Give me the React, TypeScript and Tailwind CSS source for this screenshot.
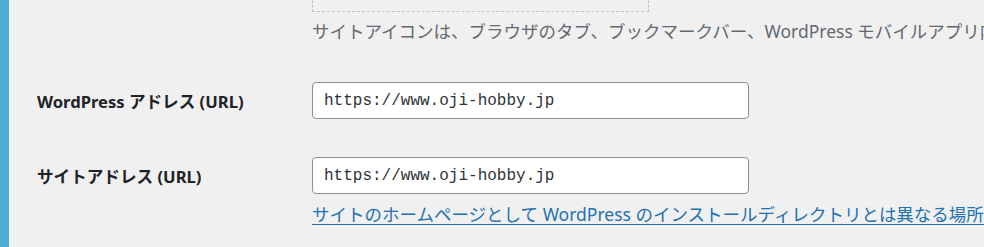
export default function App() {
  const jp = "font-['Noto_Sans','Noto_Sans_CJK_JP',sans-serif]";
  return (
    <div className={`flex h-[247px] w-[984px] overflow-hidden bg-[#f0f0f1] ${jp}`}>
      <div className="w-[9px] shrink-0 bg-[#4eafd2]" />
      <div className="flex min-w-0 flex-1 flex-col pl-[28px]">
        {/* site icon row */}
        <div className="flex">
          <div className="w-[275px] shrink-0" />
          <div className="min-w-0">
            <div className="h-[12px] w-[337px] border border-t-0 border-dashed border-[#c3c4c7]" />
            <p className="mt-[7px] whitespace-nowrap text-[17.5px] leading-[24px] text-[#646970]">
              サイトアイコンは、ブラウザのタブ、ブックマークバー、WordPress モバイルアプリ内で表示されます。
            </p>
          </div>
        </div>

        {/* wordpress address */}
        <div className="mt-[39px] flex items-start">
          <Label text="WordPress アドレス (URL)" />
          <Field value="https://www.oji-hobby.jp" />
        </div>

        {/* site address */}
        <div className="mt-[38px] flex items-start">
          <Label text="サイトアドレス (URL)" />
          <div className="min-w-0">
            <Field value="https://www.oji-hobby.jp" />
            <a
              href="#"
              className="mt-[8px] block whitespace-nowrap text-[17.5px] leading-[24px] text-[#2271b1] underline decoration-1 underline-offset-[3px]"
            >
              サイトのホームページとして WordPress のインストールディレクトリとは異なる場所を設定する場合は、ここにアドレスを入力してください。
            </a>
          </div>
        </div>
      </div>
    </div>
  );
}

function Label({ text }: { text: string }) {
  return (
    <div className="flex h-[37px] w-[275px] shrink-0 items-center pt-[3px] text-[16.6px] font-bold text-[#1d2327]">
      {text}
    </div>
  );
}

function Field({ value }: { value: string }) {
  return (
    <input
      readOnly
      value={value}
      className="block h-[37px] w-[437px] rounded-[4px] border border-[#8c8f94] bg-white px-[11px] font-['Liberation_Mono',monospace] text-[16px] text-[#2c3338] outline-none"
    />
  );
}
